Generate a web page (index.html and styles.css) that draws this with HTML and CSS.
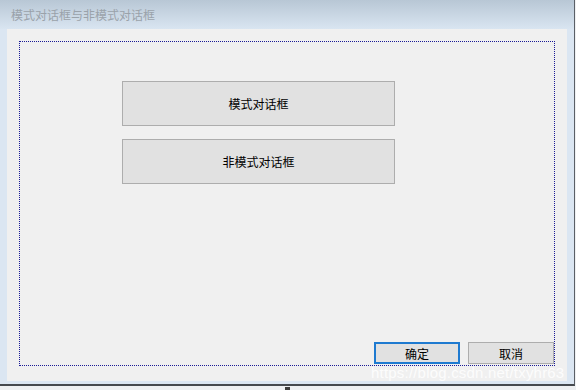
FILE: index.html
```html
<!DOCTYPE html>
<html lang="zh">
<head>
<meta charset="utf-8">
<link rel="stylesheet" href="styles.css">
</head>
<body>
<div class="window">
  <div class="titlebar"><span class="title">模式对话框与非模式对话框</span></div>
  <div class="frame">
    <div class="client">
      <div class="dotted">
        <div class="main-buttons">
          <button class="btn big">模式对话框</button>
          <button class="btn big">非模式对话框</button>
        </div>
        <div class="spacer"></div>
        <div class="footer">
          <button class="btn small default">确定</button>
          <button class="btn small">取消</button>
        </div>
      </div>
    </div>
  </div>
  <div class="watermark">https://blog.csdn.net/txyhr63</div>
</div>
<div class="below"><span class="mark"></span></div>
</body>
</html>
```
FILE: styles.css
```css
* { box-sizing: border-box; }
html, body { margin: 0; padding: 0; }
body {
  width: 576px;
  height: 390px;
  background: #eef0f2;
  font-family: "Noto Sans CJK SC", "Liberation Sans", sans-serif;
  overflow: hidden;
}
.window {
  position: relative;
  width: 575px;
  height: 386px;
  background: #dbe6f2;
  border-right: 1px solid #5a5f66;
  border-bottom: 2px solid #45494e;
  display: flex;
  flex-direction: column;
}
.titlebar {
  height: 29px;
  flex: none;
  background: linear-gradient(#b8c7d5, #d9e5f1);
  display: flex;
  align-items: center;
  padding-left: 11px;
  padding-bottom: 1px;
}
.title {
  font-size: 12px;
  color: #9aa2aa;
}
.frame {
  flex: 1;
  padding: 0 7px 3px 7px;
  display: flex;
}
.client {
  flex: 1;
  background: #f0f0f0;
  padding: 12px 12px 15px 12px;
  display: flex;
}
.dotted {
  flex: 1;
  border: 1px dotted #1a1a96;
  display: flex;
  flex-direction: column;
  padding: 39px 0 1px 102px;
}
.main-buttons {
  display: flex;
  flex-direction: column;
  gap: 13px;
}
.btn {
  font-family: "Noto Sans CJK SC", "Liberation Sans", sans-serif;
  font-size: 12px;
  color: #000;
  background: #e1e1e1;
  border: 1px solid #adadad;
  margin: 0;
  padding: 0;
  display: flex;
  align-items: center;
  justify-content: center;
}
.big {
  width: 273px;
  height: 45px;
}
.spacer { flex: 1; }
.footer {
  display: flex;
  justify-content: flex-end;
  gap: 8px;
}
.small {
  width: 86px;
  height: 22px;
}
.default {
  border: 2px solid #1e7ad0;
}
.watermark {
  position: absolute;
  left: 371px;
  top: 364px;
  font-family: "Liberation Sans", sans-serif;
  font-size: 15px;
  color: rgba(255, 255, 255, 0.85);
  letter-spacing: 0.2px;
}
.below {
  position: relative;
  height: 4px;
}
.mark {
  position: absolute;
  left: 285px;
  top: 1px;
  width: 5px;
  height: 3px;
  background: #3c3c3c;
}
```
